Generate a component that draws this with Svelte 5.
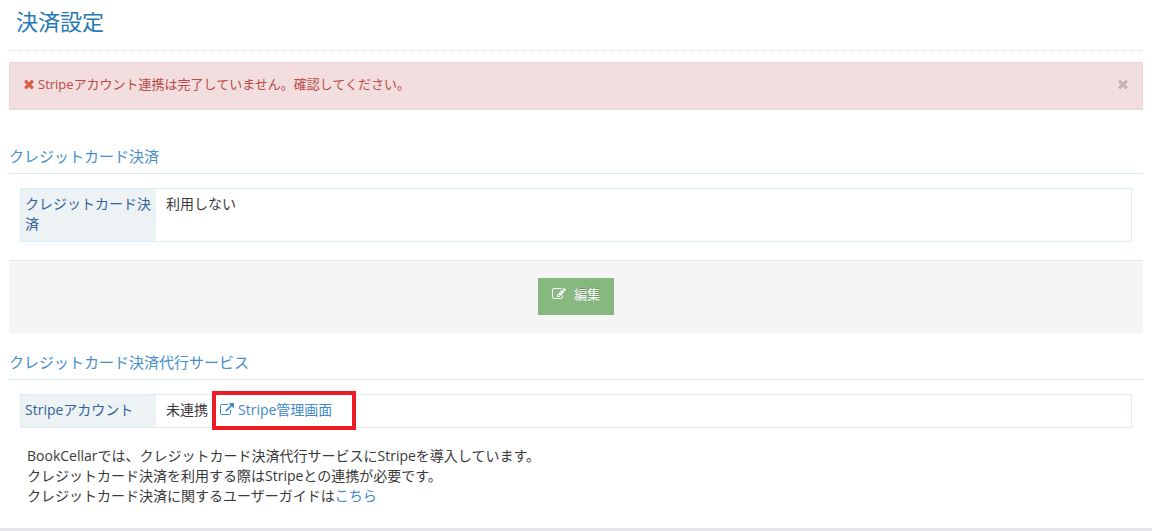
<script>
    let showAlert = true

    const timesPath = 'M1490 1322q0 40-28 68l-136 136q-28 28-68 28t-68-28l-294-294-294 294q-28 28-68 28t-68-28l-136-136q-28-28-28-68t28-68l294-294-294-294q-28-28-28-68t28-68l136-136q28-28 68-28t68 28l294 294 294-294q28-28 68-28t68 28l136 136q28 28 28 68t-28 68l-294 294 294 294q28 28 28 68z'
</script>

<main>
    <h1>決済設定</h1>

    {#if showAlert}
        <div class='alert' role='alert'>
            <p>
                <svg class='alert-icon' viewBox='0 0 1792 1792' aria-hidden='true'><path d={ timesPath } /></svg>
                Stripeアカウント連携は完了していません。確認してください。
            </p>
            <button class='close-btn' type='button' aria-label='閉じる' on:click={ () => { showAlert = false }}>
                <svg viewBox='0 0 1792 1792' aria-hidden='true'><path d={ timesPath } /></svg>
            </button>
        </div>
    {/if}

    <section>
        <h2>クレジットカード決済</h2>
        <dl class='info-row'>
            <dt>クレジットカード決済</dt>
            <dd>利用しない</dd>
        </dl>
        <div class='form-actions'>
            <button class='edit-btn' type='button'>
                <svg viewBox='0 0 1792 1792' aria-hidden='true'>
                    <path d='M888 1184l116-116-152-152-116 116v56h96v96h56zm440-720q-16-16-33 1l-350 350q-17 17-1 33t33-1l350-350q17-17 1-33zm80 594v190q0 119-84.5 203.5t-203.5 84.5h-832q-119 0-203.5-84.5t-84.5-203.5v-832q0-119 84.5-203.5t203.5-84.5h832q63 0 117 25 15 7 18 23 3 17-9 29l-49 49q-14 14-32 8-23-6-45-6h-832q-66 0-113 47t-47 113v832q0 66 47 113t113 47h832q66 0 113-47t47-113v-126q0-13 9-22l64-64q15-15 35-7t20 29zm-96-738l288 288-672 672h-288v-288zm444 132l-92 92-288-288 92-92q28-28 68-28t68 28l152 152q28 28 28 68t-28 68z' />
                </svg>
                編集
            </button>
        </div>
    </section>

    <section>
        <h2>クレジットカード決済代行サービス</h2>
        <dl class='info-row'>
            <dt>Stripeアカウント</dt>
            <dd>
                <span>未連携</span>
                <a class='stripe-link' href='#stripe'>
                    <svg viewBox='0 0 1792 1792' aria-hidden='true'>
                        <path d='M1408 928v320q0 119-84.5 203.5t-203.5 84.5h-832q-119 0-203.5-84.5t-84.5-203.5v-832q0-119 84.5-203.5t203.5-84.5h704q14 0 23 9t9 23v64q0 14-9 23t-23 9h-704q-66 0-113 47t-47 113v832q0 66 47 113t113 47h832q66 0 113-47t47-113v-320q0-14 9-23t23-9h64q14 0 23 9t9 23zm384-864v512q0 26-19 45t-45 19-45-19l-176-176-652 652q-10 10-23 10t-23-10l-114-114q-10-10-10-23t10-23l652-652-176-176q-19-19-19-45t19-45 45-19h512q26 0 45 19t19 45z' />
                    </svg>
                    Stripe管理画面
                </a>
            </dd>
        </dl>
        <p class='note'>
            BookCellarでは、クレジットカード決済代行サービスにStripeを導入しています。<br>
            クレジットカード決済を利用する際はStripeとの連携が必要です。<br>
            クレジットカード決済に関するユーザーガイドは<a href='#guide'>こちら</a>
        </p>
    </section>
</main>
<footer></footer>

<style>
    :global(body) {
        margin: 0;
        background: #fff;
    }

    main {
        padding: 0 9px;
        color: #393939;
        font-family: 'Open Sans', 'Noto Sans CJK JP', sans-serif;
        font-size: 14px;
        line-height: 20px;
    }

    h1, h2, p, dl, dd {
        margin: 0;
    }

    h1 {
        padding: 5px 7px 13px;
        border-bottom: 1px dotted #d4dadd;
        color: #2679b5;
        font-size: 22px;
        font-weight: 400;
        line-height: 32px;
    }

    h2 {
        padding-bottom: 5px;
        border-bottom: 1px solid #dce8f1;
        color: #478fca;
        font-size: 15px;
        font-weight: 400;
        line-height: 24px;
    }

    a {
        color: #428bca;
        text-decoration: none;
    }

    a:hover {
        text-decoration: underline;
    }

    svg {
        width: 14px;
        height: 14px;
        fill: currentColor;
    }

    .alert {
        display: flex;
        justify-content: space-between;
        align-items: flex-start;
        margin: 11px 0 34px;
        padding: 11px 12px 15px;
        border: 1px solid #eed3d7;
        background: #f2dede;
        color: #b94a48;
        font-size: 13px;
    }

    .alert p {
        display: flex;
        align-items: center;
        gap: 2px;
    }

    .alert-icon {
        color: #dd5a43;
    }

    .close-btn {
        display: flex;
        align-items: center;
        height: 20px;
        padding: 0;
        border: 0;
        background: none;
        color: #c2b2b2;
        cursor: pointer;
    }

    .info-row {
        display: flex;
        margin: 14px 11px 18px;
        border: 1px solid #dcebf7;
    }

    .info-row dt {
        box-sizing: border-box;
        width: 135px;
        padding: 5px 4px 7px;
        background: #edf3f4;
        color: #336199;
    }

    .info-row dd {
        display: flex;
        flex: 1;
        gap: 12px;
        padding: 5px 10px 7px;
    }

    .form-actions {
        display: flex;
        justify-content: center;
        margin-bottom: 17px;
        padding: 17px 0 18px;
        border-top: 1px solid #e5e5e5;
        background: #f5f5f5;
    }

    .edit-btn {
        display: flex;
        align-items: center;
        gap: 8px;
        padding: 6px 14px 11px;
        border: 0;
        background: #87b87f;
        color: #fff;
        font: inherit;
        font-size: 13px;
        text-shadow: 0 -1px 0 rgba(0, 0, 0, 0.25);
        cursor: pointer;
    }

    .stripe-link {
        display: flex;
        position: relative;
        align-items: center;
        gap: 4px;
    }

    .stripe-link::after {
        content: '';
        position: absolute;
        top: -9px;
        right: -24px;
        bottom: -10px;
        left: -8px;
        border: 4px solid #ed1c24;
    }

    .note {
        padding: 0 18px 22px;
    }

    footer {
        height: 3px;
        background: #e4e6e9;
    }
</style>
